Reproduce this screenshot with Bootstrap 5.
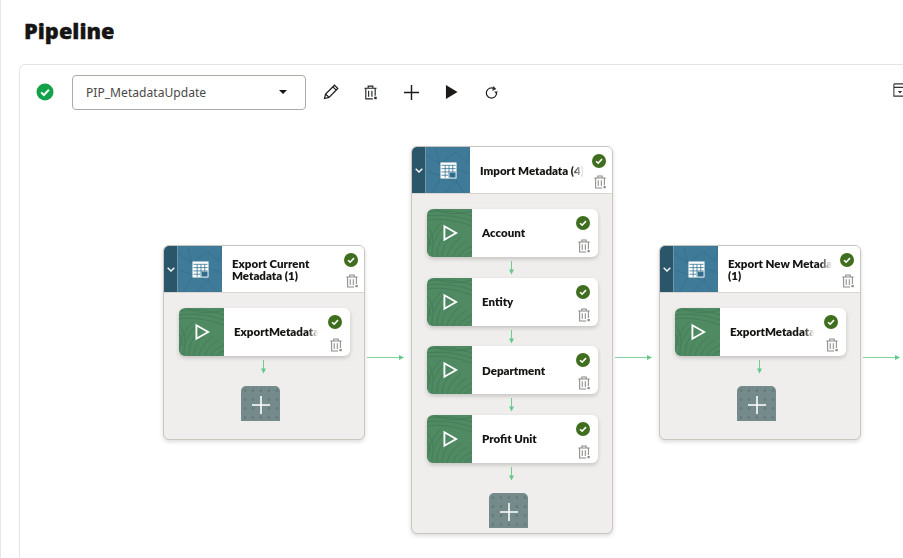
<!DOCTYPE html>
<html lang="en">
<head>
  <meta charset="UTF-8" />
  <title>Pipeline</title>
  <link rel="stylesheet" href="https://cdn.jsdelivr.net/npm/bootstrap@5.3.3/dist/css/bootstrap.min.css" />
  <style>
    html, body { height: 100%; overflow: hidden; }
    body { background: #fff; border-left: 1px solid #e8e8e8; font-family: "Noto Sans", "Liberation Sans", sans-serif; color: #161513; }
    .page-title { font-family: "Noto Sans", sans-serif; font-weight: 900; font-size: 21.8px; line-height: 30px; -webkit-text-stroke: .3px #161513; margin: 0; padding: 16px 0 0 23px; height: 64px; }
    .pipe-panel { margin-left: 18px; width: 900px; height: 520px; border: 1px solid #e4e4e4; border-radius: 6px; }
    .pipe-toolbar { height: 54px; padding: 0 0 0 16px; }
    .status-dot { width: 18px; height: 18px; }
    .pipe-select { width: 234px; height: 35px; margin-left: 18px; margin-right: 4.5px; padding: 0 14px 0 13px; border: 1px solid #aeaaa5; border-radius: 4px; font-size: 12.1px; color: #4a4846; }
    .select-value { padding-top: 2px; }
    .pipe-caret { border-left: 4px solid transparent; border-right: 4px solid transparent; border-top: 4px solid #161513; margin-right: 4px; }
    .tool-btn { width: 40.3px; height: 36px; color: #1d1b19; }
    .tool-end { width: 14px; height: 14px; margin: 0 0 5px 381.5px; color: #333; }

    .pipe-canvas { height: 460px; }
    .stage-node { position: absolute; width: 202px; background: #f0eeec; border: 1px solid #c9c5c1; border-radius: 6px; box-shadow: 0 2px 4px rgba(0,0,0,.14); overflow: hidden; }
    .stage-head { height: 47px; background: #fff; border-bottom: 1px solid #d9d6d2; }
    .stage-head .side-icons { width: 27px; }
    .stage-toggle { width: 14px; background: #2b5569; border-right: 1px solid #6d97aa; }
    .stage-art { width: 44px; }
    .stage-title { width: 104px; margin-left: 10px; padding-top: 1px; font-family: Lato, sans-serif; font-size: 11.5px; line-height: 12px; font-weight: 800; white-space: nowrap; overflow: hidden; -webkit-mask-image: linear-gradient(to right, #000 88%, transparent); mask-image: linear-gradient(to right, #000 88%, transparent); }
    .stage-body { padding: 14.5px 0 0 15px; }
    .job-card { width: 171px; height: 48px; background: #fff; border-radius: 6px; box-shadow: 0 2px 4px rgba(0,0,0,.18); overflow: hidden; }
    .job-art { width: 45px; }
    .job-title { width: 84px; margin-left: 10px; font-family: Lato, sans-serif; font-size: 11.5px; font-weight: 800; white-space: nowrap; overflow: hidden; -webkit-mask-image: linear-gradient(to right, #000 88%, transparent); mask-image: linear-gradient(to right, #000 88%, transparent); }
    .side-icons { width: 30px; padding: 7px 0 4px; }
    .ok-icon { width: 14px; height: 14px; }
    .bin-icon { width: 14px; height: 14px; margin-left: 2px; color: #8d8a87; }
    .art-fill { position: absolute; inset: 0; width: 100%; height: 100%; }
    .art-glyph { position: relative; }
    .play-glyph { margin-left: 2px; }
    .step-arrow { width: 171px; height: 20.7px; padding: 4px 3px 0 0; }
    .add-gap { width: 171px; height: 30px; padding: 4px 3px 0 0; }
    .add-tile { width: 39px; height: 35px; margin-left: 62px; padding-top: 3px; border-radius: 5px 5px 0 0; background-color: #748a8b; background-image: radial-gradient(circle, #667c7d 1.4px, transparent 1.6px); background-size: 8px 9px; }
    .link-arrow { position: absolute; width: 37px; height: 7px; }
  </style>
</head>
<body>

  <!-- shared icons and textures -->
  <svg width="0" height="0" class="position-absolute">
    <symbol id="i-ok" viewBox="0 0 16 16"><circle cx="8" cy="8" r="8" fill="#3f6e1f"/><path d="M4.6 8.3 7 10.5l4.4-4.6" fill="none" stroke="#fff" stroke-width="1.8"/></symbol>
    <symbol id="i-bin" viewBox="0 0 16 16"><path d="M1.5 3.5h13M5.5 3.5V1.2h5v2.3M3 3.5v11.3h7.5M13 3.5v8M6 6v6.5M9.5 6v6.5" fill="none" stroke="currentColor" stroke-width="1.2"/><rect x="12" y="12.5" width="2.6" height="2.6" fill="currentColor"/></symbol>
    <symbol id="i-table" viewBox="0 0 18 18"><rect x=".5" y=".5" width="17" height="17" fill="#fff"/><path d="M1.5 3.5h15M1.5 7h15M1.5 10.5h15M1.5 14h7M5.5 3.5V16.5M9.5 3.5V16.5M13.5 3.5v7" stroke="#3f7b98" stroke-width=".9" fill="none"/><rect x="10.2" y="11.2" width="6.3" height="5.3" fill="#2f6d8c"/></symbol>
    <symbol id="i-play" viewBox="0 0 16 18"><path d="M1.5 1.8 14 9 1.5 16.2z" fill="none" stroke="#fff" stroke-width="2"/></symbol>
    <symbol id="i-down" viewBox="0 0 7 14"><path d="M3.5 0v12" stroke="#72cc90" fill="none"/><path d="M1 8.5h5L3.5 13.5z" fill="#66c888"/></symbol>
    <symbol id="i-right" viewBox="0 0 37 7"><path d="M0 3.5h35" stroke="#84d3a0" fill="none"/><path d="M32 1v5l5-2.5z" fill="#66c888"/></symbol>
    <symbol id="tex-green" viewBox="0 0 45 48" preserveAspectRatio="none">
      <rect width="45" height="48" fill="#4f8a63"/>
      <g fill="none" stroke="#437a57" stroke-width=".8">
        <path d="M0 3C14 1 32 2 45 7M0 7C14 5 30 7 45 12M0 11C12 9 28 11 45 17M8 0C20 6 30 6 45 2"/>
        <path d="M0 44C1 32 6 22 14 14M5 48C4 36 9 26 18 17M10 48C9 38 14 29 23 20M15 48C15 40 19 32 28 24M20 48C21 42 25 35 34 28M26 48C27 43 31 38 40 32M32 48C33 44 37 41 45 37M38 48C39 46 41 44 45 43"/>
        <path d="M0 18C4 22 6 28 6 34M0 26C2 29 3 33 3 38"/>
      </g>
    </symbol>
    <symbol id="tex-blue" viewBox="0 0 45 48" preserveAspectRatio="none">
      <rect width="45" height="48" fill="#3f7b98"/>
      <g fill="none" stroke="#356e8a" stroke-width=".8">
        <path d="M0 8 14 18 10 2M14 18 30 6M30 6 42 16 45 4M6 48 16 30 2 26M16 30 32 38 28 22 45 28M32 38 40 48M20 48 26 40"/>
      </g>
    </symbol>
  </svg>

  <h1 class="page-title">Pipeline</h1>

  <div class="pipe-panel bg-white">
    <!-- toolbar -->
    <div class="pipe-toolbar d-flex align-items-center">
      <svg class="status-dot flex-shrink-0" viewBox="0 0 18 18"><circle cx="9" cy="9" r="8.5" fill="#13a24a"/><path d="M5.2 9.4 7.9 12l5-5.2" fill="none" stroke="#fff" stroke-width="2"/></svg>
      <div class="pipe-select d-flex align-items-center justify-content-between flex-shrink-0 bg-white">
        <span class="select-value">PIP_MetadataUpdate</span>
        <span class="pipe-caret"></span>
      </div>
      <span class="tool-btn d-flex align-items-center justify-content-center flex-shrink-0">
        <svg width="16" height="16" viewBox="0 0 16 16" fill="none" stroke="currentColor" stroke-width="1.2"><path d="M1.5 14.5 2.6 10 11.5 1.2l3.3 3.3L6 13.4zM2.6 10 6 13.4M9.9 2.8l3.3 3.3"/></svg>
      </span>
      <span class="tool-btn d-flex align-items-center justify-content-center flex-shrink-0">
        <svg width="15" height="15" viewBox="0 0 16 16" class="text-dark"><use href="#i-bin"/></svg>
      </span>
      <span class="tool-btn d-flex align-items-center justify-content-center flex-shrink-0">
        <svg width="15" height="15" viewBox="0 0 15 15" stroke="currentColor" stroke-width="1.4"><path d="M7.5 0v15M0 7.5h15"/></svg>
      </span>
      <span class="tool-btn d-flex align-items-center justify-content-center flex-shrink-0">
        <svg width="13" height="16" viewBox="0 0 14 16"><path d="M1 .5 13.5 8 1 15.5z" fill="currentColor"/></svg>
      </span>
      <span class="tool-btn d-flex align-items-center justify-content-center flex-shrink-0">
        <svg width="13" height="13" viewBox="0 0 14 14" fill="none" stroke="currentColor" stroke-width="1.3"><path d="M12.5 7.5A5.5 5.5 0 1 1 9.5 2.6"/><path d="M8.6 .6 11 3 8 4.6" /><path d="M10 6h4l-2 2.4z" fill="currentColor" stroke="none"/></svg>
      </span>
      <svg class="tool-end flex-shrink-0" viewBox="0 0 16 16" fill="none" stroke="currentColor" stroke-width="1.2"><path d="M1 1h14M1 1v14h14M1 5h14"/><path d="M5.5 9h5L8 12z" fill="currentColor" stroke="none"/></svg>
    </div>

    <!-- diagram -->
    <div class="pipe-canvas position-relative">

      <!-- stage 1 -->
      <div class="stage-node" style="left:143px;top:126.4px;height:195px">
        <div class="stage-head d-flex">
          <div class="stage-toggle d-flex align-items-center justify-content-center"><svg width="8" height="5" viewBox="0 0 8 5" fill="none" stroke="#fff" stroke-width="1.4"><path d="M.7.7 4 4 7.3.7"/></svg></div>
          <div class="stage-art position-relative d-flex align-items-center justify-content-center"><svg class="art-fill"><use href="#tex-blue"/></svg><svg class="art-glyph" width="17" height="17"><use href="#i-table"/></svg></div>
          <div class="stage-title align-self-center">Export Current<br />Metadata (1)</div>
          <div class="side-icons d-flex flex-column align-items-center justify-content-between ms-auto"><svg class="ok-icon"><use href="#i-ok"/></svg><svg class="bin-icon"><use href="#i-bin"/></svg></div>
        </div>
        <div class="stage-body">
          <div class="job-card d-flex">
            <div class="job-art position-relative d-flex align-items-center justify-content-center"><svg class="art-fill"><use href="#tex-green"/></svg><svg class="art-glyph play-glyph" width="15" height="18"><use href="#i-play"/></svg></div>
            <div class="job-title align-self-center">ExportMetadata</div>
            <div class="side-icons d-flex flex-column align-items-center justify-content-between ms-auto"><svg class="ok-icon"><use href="#i-ok"/></svg><svg class="bin-icon"><use href="#i-bin"/></svg></div>
          </div>
          <div class="add-gap d-flex justify-content-center"><svg width="7" height="14"><use href="#i-down"/></svg></div>
          <div class="add-tile d-flex align-items-center justify-content-center"><svg width="18" height="18" stroke="#fff" stroke-width="1.6"><path d="M9 0v18M0 9h18"/></svg></div>
        </div>
      </div>

      <svg class="link-arrow" style="left:347px;top:234.5px"><use href="#i-right"/></svg>

      <!-- stage 2 -->
      <div class="stage-node" style="left:391px;top:27.4px;height:388px">
        <div class="stage-head d-flex">
          <div class="stage-toggle d-flex align-items-center justify-content-center"><svg width="8" height="5" viewBox="0 0 8 5" fill="none" stroke="#fff" stroke-width="1.4"><path d="M.7.7 4 4 7.3.7"/></svg></div>
          <div class="stage-art position-relative d-flex align-items-center justify-content-center"><svg class="art-fill"><use href="#tex-blue"/></svg><svg class="art-glyph" width="17" height="17"><use href="#i-table"/></svg></div>
          <div class="stage-title align-self-center">Import Metadata (4)</div>
          <div class="side-icons d-flex flex-column align-items-center justify-content-between ms-auto"><svg class="ok-icon"><use href="#i-ok"/></svg><svg class="bin-icon"><use href="#i-bin"/></svg></div>
        </div>
        <div class="stage-body">
          <div class="job-card d-flex">
            <div class="job-art position-relative d-flex align-items-center justify-content-center"><svg class="art-fill"><use href="#tex-green"/></svg><svg class="art-glyph play-glyph" width="15" height="18"><use href="#i-play"/></svg></div>
            <div class="job-title align-self-center">Account</div>
            <div class="side-icons d-flex flex-column align-items-center justify-content-between ms-auto"><svg class="ok-icon"><use href="#i-ok"/></svg><svg class="bin-icon"><use href="#i-bin"/></svg></div>
          </div>
          <div class="step-arrow d-flex justify-content-center"><svg width="7" height="14"><use href="#i-down"/></svg></div>
          <div class="job-card d-flex">
            <div class="job-art position-relative d-flex align-items-center justify-content-center"><svg class="art-fill"><use href="#tex-green"/></svg><svg class="art-glyph play-glyph" width="15" height="18"><use href="#i-play"/></svg></div>
            <div class="job-title align-self-center">Entity</div>
            <div class="side-icons d-flex flex-column align-items-center justify-content-between ms-auto"><svg class="ok-icon"><use href="#i-ok"/></svg><svg class="bin-icon"><use href="#i-bin"/></svg></div>
          </div>
          <div class="step-arrow d-flex justify-content-center"><svg width="7" height="14"><use href="#i-down"/></svg></div>
          <div class="job-card d-flex">
            <div class="job-art position-relative d-flex align-items-center justify-content-center"><svg class="art-fill"><use href="#tex-green"/></svg><svg class="art-glyph play-glyph" width="15" height="18"><use href="#i-play"/></svg></div>
            <div class="job-title align-self-center">Department</div>
            <div class="side-icons d-flex flex-column align-items-center justify-content-between ms-auto"><svg class="ok-icon"><use href="#i-ok"/></svg><svg class="bin-icon"><use href="#i-bin"/></svg></div>
          </div>
          <div class="step-arrow d-flex justify-content-center"><svg width="7" height="14"><use href="#i-down"/></svg></div>
          <div class="job-card d-flex">
            <div class="job-art position-relative d-flex align-items-center justify-content-center"><svg class="art-fill"><use href="#tex-green"/></svg><svg class="art-glyph play-glyph" width="15" height="18"><use href="#i-play"/></svg></div>
            <div class="job-title align-self-center">Profit Unit</div>
            <div class="side-icons d-flex flex-column align-items-center justify-content-between ms-auto"><svg class="ok-icon"><use href="#i-ok"/></svg><svg class="bin-icon"><use href="#i-bin"/></svg></div>
          </div>
          <div class="add-gap d-flex justify-content-center"><svg width="7" height="14"><use href="#i-down"/></svg></div>
          <div class="add-tile d-flex align-items-center justify-content-center"><svg width="18" height="18" stroke="#fff" stroke-width="1.6"><path d="M9 0v18M0 9h18"/></svg></div>
        </div>
      </div>

      <svg class="link-arrow" style="left:595px;top:234.5px"><use href="#i-right"/></svg>

      <!-- stage 3 -->
      <div class="stage-node" style="left:639px;top:126.4px;height:195px">
        <div class="stage-head d-flex">
          <div class="stage-toggle d-flex align-items-center justify-content-center"><svg width="8" height="5" viewBox="0 0 8 5" fill="none" stroke="#fff" stroke-width="1.4"><path d="M.7.7 4 4 7.3.7"/></svg></div>
          <div class="stage-art position-relative d-flex align-items-center justify-content-center"><svg class="art-fill"><use href="#tex-blue"/></svg><svg class="art-glyph" width="17" height="17"><use href="#i-table"/></svg></div>
          <div class="stage-title align-self-center">Export New Metadata<br />(1)</div>
          <div class="side-icons d-flex flex-column align-items-center justify-content-between ms-auto"><svg class="ok-icon"><use href="#i-ok"/></svg><svg class="bin-icon"><use href="#i-bin"/></svg></div>
        </div>
        <div class="stage-body">
          <div class="job-card d-flex">
            <div class="job-art position-relative d-flex align-items-center justify-content-center"><svg class="art-fill"><use href="#tex-green"/></svg><svg class="art-glyph play-glyph" width="15" height="18"><use href="#i-play"/></svg></div>
            <div class="job-title align-self-center">ExportMetadata</div>
            <div class="side-icons d-flex flex-column align-items-center justify-content-between ms-auto"><svg class="ok-icon"><use href="#i-ok"/></svg><svg class="bin-icon"><use href="#i-bin"/></svg></div>
          </div>
          <div class="add-gap d-flex justify-content-center"><svg width="7" height="14"><use href="#i-down"/></svg></div>
          <div class="add-tile d-flex align-items-center justify-content-center"><svg width="18" height="18" stroke="#fff" stroke-width="1.6"><path d="M9 0v18M0 9h18"/></svg></div>
        </div>
      </div>

      <svg class="link-arrow" style="left:843px;top:234.5px"><use href="#i-right"/></svg>
    </div>
  </div>

  <script src="https://cdn.jsdelivr.net/npm/bootstrap@5.3.3/dist/js/bootstrap.bundle.min.js"></script>
</body>
</html>
